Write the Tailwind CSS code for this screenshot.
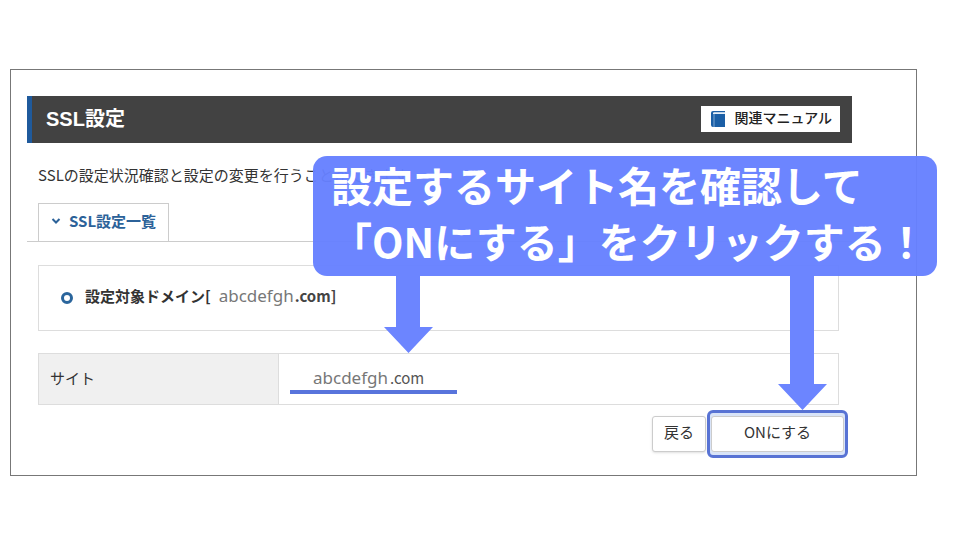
<!DOCTYPE html>
<html lang="ja">
<head>
  <meta charset="UTF-8">
  <meta name="viewport" content="width=device-width, initial-scale=1.0">
  <title>SSL設定</title>
  <script src="https://cdn.jsdelivr.net/npm/@tailwindcss/browser@4"></script>
</head>
<body class="bg-white text-[#333] text-[15px] leading-6 font-['Noto_Sans_CJK_JP',sans-serif]">
  <main class="relative mt-[69px] ml-[10px] mr-[43px] border border-[#777] pt-[26px] pb-[17px] pl-4 pr-16">

    <header class="flex items-center justify-between bg-[#424242] border-l-[5px] border-[#1f5a9c] h-[47px] pl-[14px] pr-3">
      <h1 class="pb-[2px] text-white text-[20px] font-bold font-['Liberation_Sans','Noto_Sans_CJK_JP',sans-serif]">SSL設定</h1>
      <a href="#" class="flex items-center gap-2 bg-white text-[14px] font-medium text-[#222] h-[26px] pl-[10px] pr-2 mb-[2px]">
        <svg class="w-[15px] h-4" viewBox="0 0 15 16" aria-hidden="true">
          <path d="M2 0H14V1.500H3V3H14V16H2Q0 16 0 14V2Q0 0 2 0Z" fill="#1b5fa6"/>
          <path d="M2 1.500H14V3H2Z" fill="#e4eef8"/>
          <path d="M3 3V16" stroke="#7fa9d4" stroke-width="1"/>
        </svg>
        <span class="pb-1">関連マニュアル</span>
      </a>
    </header>

    <p class="mt-5 ml-[11px]">SSLの設定状況確認と設定の変更を行うことができます</p>

    <nav class="mt-4 pl-[11px] border-b border-[#ccc] flex">
      <a href="#list" class="flex items-center gap-2 h-[38px] pl-3 pr-3 pb-1 border border-b-0 border-[#ccc] text-[#2c6299] font-bold">
        <svg class="w-[10px] h-2" viewBox="0 0 10 8" fill="none" stroke="#2c6299" stroke-width="2" aria-hidden="true"><path d="M1.500 2L5 5.500L8.500 2"/></svg>
        SSL設定一覧
      </a>
    </nav>

    <div id="list" class="mt-[23px] ml-[11px] mr-[13px]">
      <h2 class="flex items-center border border-[#ddd] h-[66px] pl-[22px] pb-1">
        <span class="size-3 rounded-full border-3 border-[#2a659c] mr-3 mt-1"></span>
        <span class="font-bold">設定対象ドメイン[</span>
        <span class="ml-2 text-[17px] text-[#777] font-['Noto_Sans',sans-serif]">abcdefgh</span>
        <span class="ml-px font-bold text-[#444]">.com]</span>
      </h2>

      <table class="mt-[22px] w-full border-collapse">
        <tbody>
          <tr class="h-[51px]">
            <th scope="row" class="w-[30%] border border-[#ddd] bg-[#f0f0f0] pl-[11px] pb-[2px] text-left font-normal">サイト</th>
            <td class="border border-[#ddd] pl-[11px] pt-[2px]">
              <span class="inline-flex w-[167px] items-baseline border-b-4 border-[#5874dc] pl-[23px]">
                <span class="text-[17px] text-[#777] font-['Noto_Sans',sans-serif]">abcdefgh</span>
                <span class="ml-[2px] text-[#555]">.com</span>
              </span>
            </td>
          </tr>
        </tbody>
      </table>
    </div>

    <div class="mt-[5px] mr-1 flex items-center justify-end gap-px">
      <button type="button" class="h-9 w-[54px] rounded-[3px] border border-[#ccc] bg-white pb-1 text-[15px] shadow">戻る</button>
      <div class="rounded-md border-3 border-[#5873d4] bg-[#d9e4f8] px-px py-[3px]">
        <button type="button" class="block h-9 w-[133px] rounded-[3px] border border-[#ccc] bg-white pb-1 text-[15px]">ONにする</button>
      </div>
    </div>

    <!-- callout with arrows to the site name and the ON button -->
    <div class="absolute top-[86px] left-[302px] -right-[21px] h-[120px] rounded-[14px] bg-[#6680ff]/96 pl-[18px] text-white text-[41px] leading-[56px] font-bold whitespace-nowrap">
      <p>設定するサイト名を確認して</p>
      <p>「ONにする」をクリックする！</p>
      <svg class="absolute top-full left-[71px] w-[49px] h-[77px]" viewBox="0 0 49 77" fill="#6c85ff" aria-hidden="true"><path d="M12 0H36V51H49L24.500 77L0 51H12Z"/></svg>
      <svg class="absolute top-full right-[110px] w-[49px] h-[134px]" viewBox="0 0 49 134" fill="#6c85ff" aria-hidden="true"><path d="M12 0H36V108H49L24.500 134L0 108H12Z"/></svg>
    </div>
  </main>
</body>
</html>
